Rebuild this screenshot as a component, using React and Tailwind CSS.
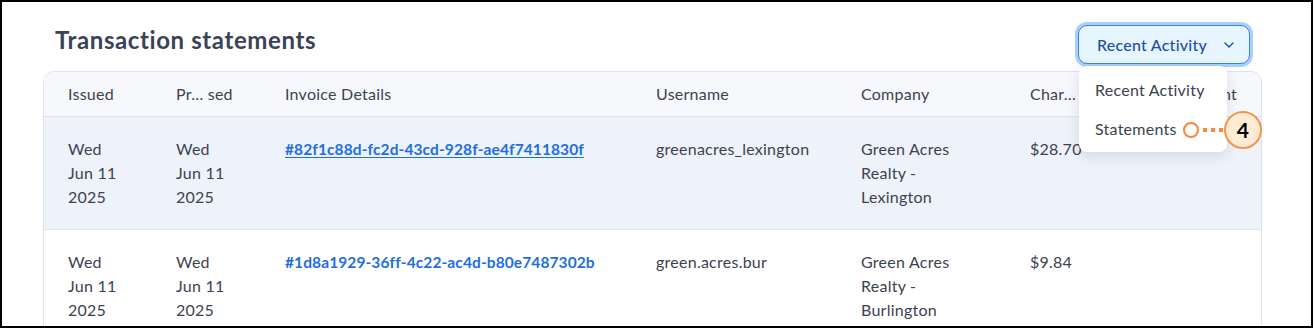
import React from 'react';
import { ChevronDown } from 'lucide-react';

const rows = [
  {
    issued: ['Wed', 'Jun 11', '2025'],
    processed: ['Wed', 'Jun 11', '2025'],
    invoice: '#82f1c88d-fc2d-43cd-928f-ae4f7411830f',
    underline: true,
    username: 'greenacres_lexington',
    company: ['Green Acres', 'Realty -', 'Lexington'],
    charge: '$28.70',
    highlight: true,
  },
  {
    issued: ['Wed', 'Jun 11', '2025'],
    processed: ['Wed', 'Jun 11', '2025'],
    invoice: '#1d8a1929-36ff-4c22-ac4d-b80e7487302b',
    underline: false,
    username: 'green.acres.bur',
    company: ['Green Acres', 'Realty -', 'Burlington'],
    charge: '$9.84',
    highlight: false,
  },
];

const Lines = ({ items }) => (
  <div className="flex flex-col">
    {items.map((t) => (
      <span key={t}>{t}</span>
    ))}
  </div>
);

export default function App() {
  return (
    <div className="w-[1313px] h-[328px] border-2 border-black bg-white overflow-hidden font-['Lato','Liberation_Sans',sans-serif] text-[#3d4250] tracking-[0.25px]">
      <div className="pl-[41px] pr-[49px] pt-[23px]">
        {/* Header */}
        <div className="flex items-start justify-between pl-3 pr-[12px]">
          <h1 className="text-[24px] leading-[30px] font-bold text-[#3a4356] tracking-[0.6px]">Transaction statements</h1>
          <div className="relative">
            <button className="flex items-center gap-[14px] h-[39px] w-[172px] pl-1.5 justify-center rounded-[9px] border border-[#3b82e6] bg-[#e7f5ff] ring-[3px] ring-[#a9d0fb] text-[16px] text-[#1d4ea6] font-medium">
              Recent Activity
              <ChevronDown size={16} strokeWidth={2} />
            </button>
            <div className="absolute left-[1px] top-[41px] z-10 w-[148px] rounded-lg bg-white py-[5px] shadow-[0_4px_14px_rgba(30,40,70,0.13)] text-[16px] text-[#3b4250]">
              <div className="px-4 h-[38px] flex items-center whitespace-nowrap">Recent Activity</div>
              <div className="px-4 h-[38px] pt-px flex items-center">Statements</div>
            </div>
            {/* annotation */}
            <div className="absolute left-[105px] top-[86px] z-20 flex items-center">
              <span className="w-[16px] h-[16px] rounded-full border-[2.5px] border-[#f4883d] bg-white" />
              <span className="ml-[4px] w-[4px] h-[4px] bg-[#f4883d]" />
              <span className="ml-[4px] w-[4px] h-[4px] bg-[#f4883d]" />
              <span className="ml-[4px] w-[4px] h-[4px] bg-[#f4883d]" />
              <span className="ml-[1px] flex items-center justify-center w-[38px] h-[38px] rounded-full border-2 border-[#f4954c] bg-[#fdebd3] text-[21px] font-bold text-black">4</span>
            </div>
          </div>
        </div>

        {/* Card */}
        <div className="mt-[7px] rounded-[11px] border border-[#dfe3ee] overflow-hidden">
          <table className="w-full table-fixed text-[16px] leading-6 text-left">
            <colgroup>
              <col className="w-[108px]" />
              <col className="w-[109px]" />
              <col className="w-[371px]" />
              <col className="w-[205px]" />
              <col className="w-[169px]" />
              <col className="w-[110px]" />
              <col />
            </colgroup>
            <thead className="bg-[#f7f8fc]">
              <tr className="border-b border-[#dfe3ee]">
                <th className="pl-6 py-2.5 font-normal">Issued</th>
                <th className="pl-6 py-2.5 font-normal">Pr… sed</th>
                <th className="pl-6 py-2.5 font-normal">Invoice Details</th>
                <th className="pl-6 py-2.5 font-normal">Username</th>
                <th className="pl-6 py-2.5 font-normal">Company</th>
                <th className="pl-6 py-2.5 font-normal">Char…</th>
                <th className="pr-6 py-2.5 font-normal text-right">Amount</th>
              </tr>
            </thead>
            <tbody>
              {rows.map((r) => (
                <tr key={r.invoice} className={`border-b border-[#dfe3ee] align-top ${r.highlight ? 'bg-[#eef2fa]' : 'bg-white'}`}>
                  <td className="pl-6 py-5"><Lines items={r.issued} /></td>
                  <td className="pl-6 py-5"><Lines items={r.processed} /></td>
                  <td className="pl-6 py-5">
                    <a className={`text-[15.5px] font-bold text-[#1e6fe0] tracking-[0.1px] ${r.underline ? 'underline underline-offset-2' : ''}`}>{r.invoice}</a>
                  </td>
                  <td className="pl-6 py-5">{r.username}</td>
                  <td className="pl-6 py-5"><Lines items={r.company} /></td>
                  <td className="pl-6 py-5">{r.charge}</td>
                  <td className="pr-6 py-5" />
                </tr>
              ))}
            </tbody>
          </table>
        </div>
      </div>
    </div>
  );
}
